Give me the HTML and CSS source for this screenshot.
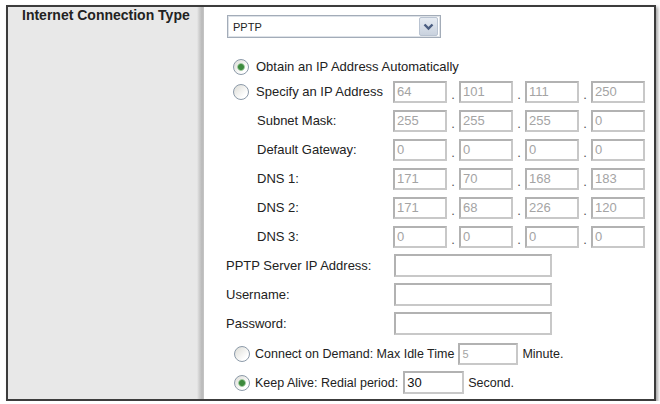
FILE: index.html
```html
<!DOCTYPE html>
<html lang="en">
<head>
  <meta charset="UTF-8">
  <title>Internet Connection Type</title>
  <link rel="stylesheet" href="styles.css">
</head>
<body>
  <div class="panel">
    <!-- left column with the section title -->
    <div class="side">
      <h2>Internet Connection Type</h2>
    </div>

    <div class="main">
      <div class="select">
        <span class="select-value">PPTP</span>
        <span class="select-arrow">
          <svg width="15" height="15" viewBox="0 0 15 15"><path d="M3.5 5.5 L7.5 9.5 L11.5 5.5" fill="none" stroke="#4a5d80" stroke-width="2.4"/></svg>
        </span>
      </div>

      <label class="radio-row obtain"><input type="radio" name="ipmode" checked>Obtain an IP Address Automatically</label>

      <!-- static address block -->
      <div class="ip-grid">
        <label class="ip-label"><input type="radio" name="ipmode">Specify an IP Address</label>
        <input class="octet" value="64" disabled><span class="dot">.</span>
        <input class="octet" value="101" disabled><span class="dot">.</span>
        <input class="octet" value="111" disabled><span class="dot">.</span>
        <input class="octet" value="250" disabled>

        <span class="ip-label sub">Subnet Mask:</span>
        <input class="octet" value="255" disabled><span class="dot">.</span>
        <input class="octet" value="255" disabled><span class="dot">.</span>
        <input class="octet" value="255" disabled><span class="dot">.</span>
        <input class="octet" value="0" disabled>

        <span class="ip-label sub">Default Gateway:</span>
        <input class="octet" value="0" disabled><span class="dot">.</span>
        <input class="octet" value="0" disabled><span class="dot">.</span>
        <input class="octet" value="0" disabled><span class="dot">.</span>
        <input class="octet" value="0" disabled>

        <span class="ip-label sub">DNS 1:</span>
        <input class="octet" value="171" disabled><span class="dot">.</span>
        <input class="octet" value="70" disabled><span class="dot">.</span>
        <input class="octet" value="168" disabled><span class="dot">.</span>
        <input class="octet" value="183" disabled>

        <span class="ip-label sub">DNS 2:</span>
        <input class="octet" value="171" disabled><span class="dot">.</span>
        <input class="octet" value="68" disabled><span class="dot">.</span>
        <input class="octet" value="226" disabled><span class="dot">.</span>
        <input class="octet" value="120" disabled>

        <span class="ip-label sub">DNS 3:</span>
        <input class="octet" value="0" disabled><span class="dot">.</span>
        <input class="octet" value="0" disabled><span class="dot">.</span>
        <input class="octet" value="0" disabled><span class="dot">.</span>
        <input class="octet" value="0" disabled>
      </div>

      <!-- PPTP login -->
      <div class="field-grid">
        <span>PPTP Server IP Address:</span>
        <input class="text-field">
        <span>Username:</span>
        <input class="text-field">
        <span>Password:</span>
        <input class="text-field" type="password">
      </div>

      <div class="opt-row demand">
        <input type="radio" name="conn">
        <span>Connect on Demand: Max Idle Time</span>
        <input class="idle" value="5" disabled>
        <span>Minute.</span>
      </div>
      <div class="opt-row">
        <input type="radio" name="conn" checked>
        <span>Keep Alive: Redial period:</span>
        <input class="redial" value="30">
        <span>Second.</span>
      </div>
    </div>
  </div>
</body>
</html>
```

FILE: styles.css
```css
body {
  margin: 0;
  background: #ffffff;
  font-family: "Liberation Sans", Arial, sans-serif;
  font-size: 13px;
  color: #222222;
}
.panel {
  box-sizing: border-box;
  display: flex;
  width: 650px;
  height: 396px;
  margin: 5px 0 0 6px;
  border: 2px solid #3c3c3c;
  box-shadow: 2px 2px 3px rgba(0, 0, 0, 0.35);
  background: #ffffff;
}
.side {
  width: 196px;
  background: linear-gradient(to right, #e8e8e8 0, #e8e8e8 189px, #d2d2d2 191px, #b9b9b9 194px, #c6c6c6 196px);
}
.side h2 {
  margin: 0;
  padding-left: 14px;
  font-size: 14px;
  line-height: 17px;
  font-weight: bold;
  color: #222222;
}
.main {
  flex: 1;
  padding: 8px 0 0 22px;
}

/* dropdown */
.select {
  box-sizing: border-box;
  display: flex;
  align-items: center;
  justify-content: space-between;
  width: 214px;
  height: 23px;
  margin-left: 1px;
  border: 1px solid #a3acb8;
  box-shadow: inset 0 0 0 1px #dde2e8;
}
.select-value {
  padding-left: 5px;
  font-size: 11px;
}
.select-arrow {
  display: flex;
  align-items: center;
  justify-content: center;
  width: 17px;
  height: 17px;
  margin-right: 2px;
  border: 1px solid #b9c3d1;
  border-radius: 2px;
  background: linear-gradient(#e6ebf2, #c9d2de);
}

/* radios, XP style */
input[type="radio"] {
  appearance: none;
  -webkit-appearance: none;
  box-sizing: border-box;
  width: 16px;
  height: 16px;
  margin: 0;
  border: 1px solid #8c9aa9;
  border-radius: 50%;
  background: linear-gradient(135deg, #dcdcd6, #ffffff 75%);
  flex-shrink: 0;
}
input[type="radio"]:checked {
  background: radial-gradient(circle, #3d8a3d 0, #3d8a3d 2.5px, #a9cfa9 3.6px, rgba(255, 255, 255, 0) 4.2px),
              linear-gradient(135deg, #dcdcd6, #ffffff 75%);
}
.radio-row {
  display: flex;
  align-items: center;
  height: 21px;
  margin-top: 18px;
}
.radio-row input,
.ip-label input {
  margin: 0 7px 0 7px;
}

/* address grid */
.ip-grid {
  display: grid;
  grid-template-columns: 167px 54px 12px 54px 12px 54px 12px 54px;
  grid-auto-rows: 29px;
  align-items: center;
}
.ip-label {
  display: flex;
  align-items: center;
}
.ip-label.sub {
  padding-left: 31px;
}
.dot {
  text-align: center;
  padding-top: 5px;
  color: #555555;
}
.octet,
.text-field,
.idle,
.redial {
  box-sizing: border-box;
  height: 22px;
  padding: 0 2px;
  border: 2px solid #c0c0c0;
  border-color: #b2b2b2 #c8c8c8 #c8c8c8 #b2b2b2;
  background: #ffffff;
  font-family: "Liberation Sans", Arial, sans-serif;
  font-size: 13px;
  color: #a4a4a4;
  outline: none;
}
.octet {
  width: 54px;
}

.field-grid {
  display: grid;
  grid-template-columns: 168px 158px;
  grid-auto-rows: 29px;
  align-items: center;
}
.text-field {
  width: 158px;
  height: 23px;
}

.opt-row {
  display: flex;
  align-items: center;
  height: 29px;
  font-size: 12.5px;
}
.opt-row.demand {
  margin-top: 1px;
}
.opt-row input[type="radio"] {
  margin: 0 5px 0 8px;
}
.idle {
  width: 60px;
  margin: 0 4px 0 4px;
  font-size: 11px;
}
.redial {
  width: 61px;
  height: 23px;
  margin: 0 4px 0 5px;
  color: #111111;
}
```
